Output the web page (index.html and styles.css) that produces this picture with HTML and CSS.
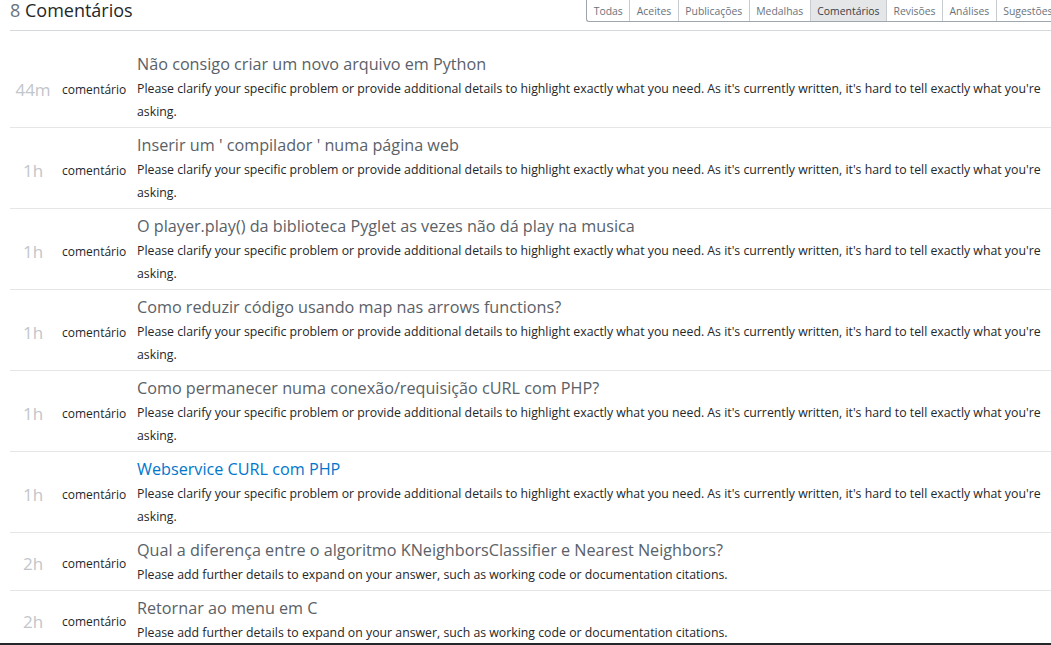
FILE: index.html
```html
<!DOCTYPE html>
<html lang="pt">
<head>
<meta charset="utf-8">
<title>Comentários</title>
<link rel="stylesheet" href="styles.css">
</head>
<body>
<div class="page">
  <div class="header">
    <h1 class="heading"><span class="count">8</span> Comentários</h1>
    <div class="tabs">
      <span class="tab">Todas</span>
      <span class="tab">Aceites</span>
      <span class="tab">Publicações</span>
      <span class="tab">Medalhas</span>
      <span class="tab is-selected">Comentários</span>
      <span class="tab">Revisões</span>
      <span class="tab">Análises</span>
      <span class="tab">Sugestões</span>
    </div>
  </div>
  <div class="list">
    <div class="row">
      <div class="time">44m</div>
      <div class="kind">comentário</div>
      <div class="main">
        <div class="title">Não consigo criar um novo arquivo em Python</div>
        <div class="excerpt">Please clarify your specific problem or provide additional details to highlight exactly what you need. As it's currently written, it's hard to tell exactly what you're asking.</div>
      </div>
    </div>
    <div class="row">
      <div class="time">1h</div>
      <div class="kind">comentário</div>
      <div class="main">
        <div class="title">Inserir um ' compilador ' numa página web</div>
        <div class="excerpt">Please clarify your specific problem or provide additional details to highlight exactly what you need. As it's currently written, it's hard to tell exactly what you're asking.</div>
      </div>
    </div>
    <div class="row">
      <div class="time">1h</div>
      <div class="kind">comentário</div>
      <div class="main">
        <div class="title">O player.play() da biblioteca Pyglet as vezes não dá play na musica</div>
        <div class="excerpt">Please clarify your specific problem or provide additional details to highlight exactly what you need. As it's currently written, it's hard to tell exactly what you're asking.</div>
      </div>
    </div>
    <div class="row">
      <div class="time">1h</div>
      <div class="kind">comentário</div>
      <div class="main">
        <div class="title">Como reduzir código usando map nas arrows functions?</div>
        <div class="excerpt">Please clarify your specific problem or provide additional details to highlight exactly what you need. As it's currently written, it's hard to tell exactly what you're asking.</div>
      </div>
    </div>
    <div class="row">
      <div class="time">1h</div>
      <div class="kind">comentário</div>
      <div class="main">
        <div class="title">Como permanecer numa conexão/requisição cURL com PHP?</div>
        <div class="excerpt">Please clarify your specific problem or provide additional details to highlight exactly what you need. As it's currently written, it's hard to tell exactly what you're asking.</div>
      </div>
    </div>
    <div class="row">
      <div class="time">1h</div>
      <div class="kind">comentário</div>
      <div class="main">
        <div class="title is-link">Webservice CURL com PHP</div>
        <div class="excerpt">Please clarify your specific problem or provide additional details to highlight exactly what you need. As it's currently written, it's hard to tell exactly what you're asking.</div>
      </div>
    </div>
    <div class="row">
      <div class="time">2h</div>
      <div class="kind">comentário</div>
      <div class="main">
        <div class="title">Qual a diferença entre o algoritmo KNeighborsClassifier e Nearest Neighbors?</div>
        <div class="excerpt">Please add further details to expand on your answer, such as working code or documentation citations.</div>
      </div>
    </div>
    <div class="row">
      <div class="time">2h</div>
      <div class="kind">comentário</div>
      <div class="main">
        <div class="title">Retornar ao menu em C</div>
        <div class="excerpt">Please add further details to expand on your answer, such as working code or documentation citations.</div>
      </div>
    </div>
  </div>
</div>
</body>
</html>
```

FILE: styles.css
```css
html, body {
  margin: 0;
  padding: 0;
  background: #ffffff;
  overflow: hidden;
}

body {
  font-family: "Open Sans", "Noto Sans", "Liberation Sans", sans-serif;
  color: #242729;
  height: 645px;
  border-bottom: 2px solid #242729;
  box-sizing: border-box;
}

.page {
  width: 1050px;
  padding-left: 10px;
}

.header {
  display: flex;
  justify-content: space-between;
  align-items: flex-start;
  height: 30px;
  border-bottom: 1px solid #d6d9dc;
}

.heading {
  margin: 0;
  font-size: 18px;
  font-weight: 400;
  line-height: 21px;
  color: #242729;
}

.count {
  color: #6a737c;
}

.tabs {
  display: flex;
  height: 21px;
  border-left: 1px solid #9fa6ad;
  border-bottom: 1px solid #9fa6ad;
  border-bottom-left-radius: 3px;
}

.tab {
  display: flex;
  align-items: center;
  padding: 0 6.5px;
  font-size: 10.4px;
  color: #6a737c;
  border-right: 1px solid #c8ccd0;
  white-space: nowrap;
}

.tab.is-selected {
  background: #e4e6e8;
  color: #3b4045;
}

.list {
  padding-top: 16px;
}

.row {
  display: flex;
  align-items: center;
  padding: 6px 0 4px;
  border-bottom: 1px solid #e4e6e8;
}

.time {
  width: 46px;
  flex: none;
  text-align: center;
  font-size: 17px;
  color: #c2c6ca;
  padding-top: 2px;
}

.kind {
  width: 75px;
  flex: none;
  margin-left: 6px;
  font-size: 12px;
  color: #242729;
  padding-top: 2px;
}

.main {
  flex: 1;
  min-width: 0;
}

.title {
  font-size: 16.2px;
  line-height: 23px;
  padding-bottom: 1px;
  color: #5a6167;
}

.title.is-link {
  color: #0077cc;
}

.excerpt {
  font-size: 12.3px;
  line-height: 23px;
  color: #242729;
}
```
